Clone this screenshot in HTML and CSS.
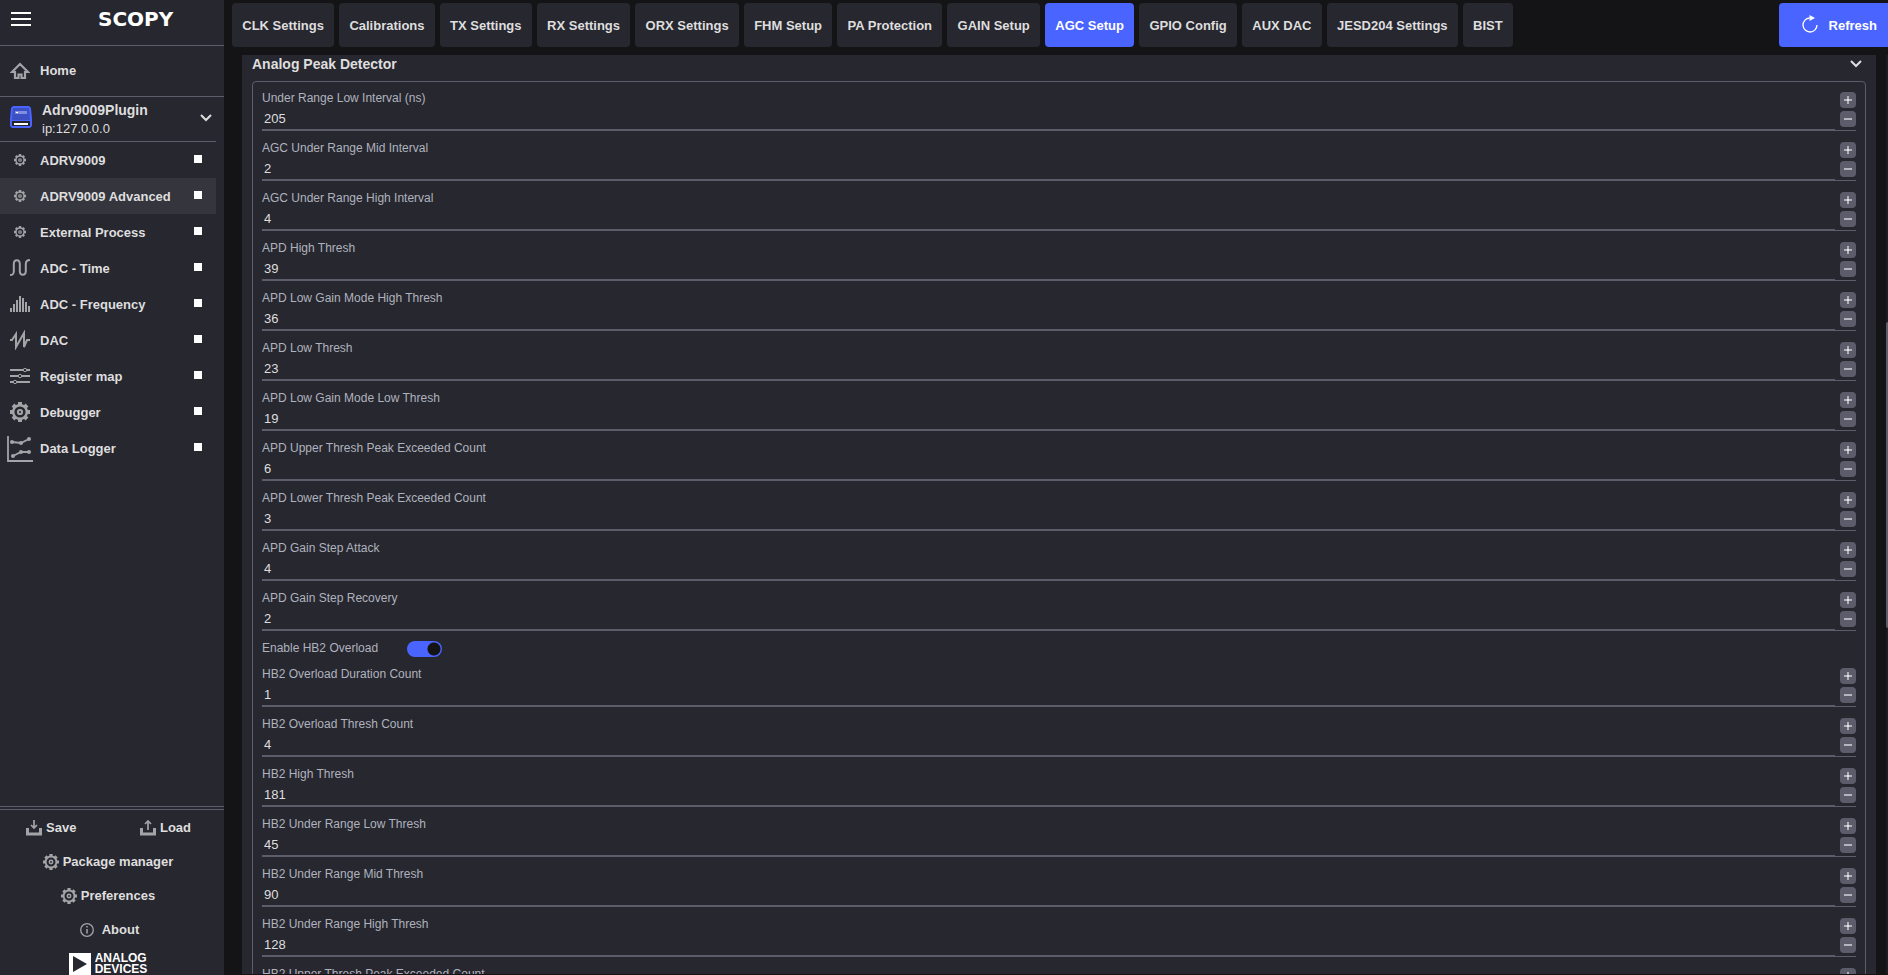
FILE: index.html
```html
<!DOCTYPE html>
<html lang="en">
<head>
<meta charset="utf-8">
<title>Scopy - AGC Setup</title>
<link rel="stylesheet" href="styles.css">
</head>
<body>
<svg class="defs" aria-hidden="true">
  <symbol id="gear" viewBox="0 0 20 20">
    <circle cx="10" cy="10" r="6.8" fill="none" stroke="currentColor" stroke-width="2.4"/>
    <circle cx="10" cy="10" r="2.1" fill="none" stroke="currentColor" stroke-width="2"/>
    <path d="M10 0v3.5M10 16.500v3.500M0 10h3.500M16.500 10h3.500M3 3l2.400 2.400M14.600 14.600l2.400 2.400M3 17l2.400-2.400M14.600 5.400l2.400-2.400" stroke="currentColor" stroke-width="4"/>
  </symbol>
  <symbol id="chevron" viewBox="0 0 12 8">
    <path d="M1 1l5 5 5-5" fill="none" stroke="currentColor" stroke-width="2"/>
  </symbol>
</svg>

<aside class="sidebar">
  <header class="brand">
    <button class="menu" aria-label="Menu"><span></span><span></span><span></span></button>
    <span class="wordmark">SCOPY</span>
  </header>
  <a class="home" href="#">
    <svg class="icon" viewBox="0 0 20 20"><path d="M10 3L2 11h3v6h3.500v-3.500h3V17H15v-6h3z" fill="none" stroke="currentColor" stroke-width="2.200"/></svg>
    Home
  </a>
  <button class="device">
    <svg class="device-icon" viewBox="0 0 22 22"><path d="M3 0h16l2 2 1 11v7l-2 2H2l-2-2v-7L1 2z" fill="#4a64ff"/><path d="M3 2h16l1 12H2z" fill="#3c50c4"/><path d="M5 5h12v3H5z" fill="#7f8fe0"/><path d="M6 6h2v1H6z" fill="#fff"/><path d="M2 15h18v5H2z" fill="#25252e"/><path d="M4 17h14v2H4z" fill="#fff"/></svg>
    <span class="device-text"><strong>Adrv9009Plugin</strong><span>ip:127.0.0.0</span></span>
    <svg class="chevron"><use href="#chevron"/></svg>
  </button>
  <nav class="tools">
    <a href="#"><svg class="icon small"><use href="#gear"/></svg>ADRV9009<i></i></a>
    <a href="#" class="current"><svg class="icon small"><use href="#gear"/></svg>ADRV9009 Advanced<i></i></a>
    <a href="#"><svg class="icon small"><use href="#gear"/></svg>External Process<i></i></a>
    <a href="#"><svg class="icon" viewBox="0 0 20 20"><path d="M0 17c3 0 3.800-1 3.800-4V6c0-5 6-5 6 0v7c0 5 6 5 6 0V6c0-3 1.500-4 4.200-4" fill="none" stroke="currentColor" stroke-width="2"/></svg>ADC - Time<i></i></a>
    <a href="#"><svg class="icon" viewBox="0 0 20 20"><path d="M1 18v-4M4 18v-8M7 18V6M10 18V2M13 18V4M16 18V8M19 18v-6" stroke="currentColor" stroke-width="2"/></svg>ADC - Frequency<i></i></a>
    <a href="#"><svg class="icon" viewBox="0 0 20 20"><path d="M0 10h2l4-6v13L14 3v14l3-7h3" fill="none" stroke="currentColor" stroke-width="2"/></svg>DAC<i></i></a>
    <a href="#"><svg class="icon" viewBox="0 0 20 20"><path d="M0 4h14M17 4h3M0 10h9M12 10h8M0 16h4M7 16h13" stroke="currentColor" stroke-width="2"/><g fill="none" stroke="currentColor"><circle cx="15" cy="4" r="1.700"/><circle cx="10" cy="10" r="1.700"/><circle cx="5" cy="16" r="1.700"/></g></svg>Register map<i></i></a>
    <a href="#"><svg class="icon"><use href="#gear"/></svg>Debugger<i></i></a>
    <a href="#"><svg class="icon large" viewBox="0 0 26 26"><g fill="none" stroke="currentColor" stroke-width="1.800"><path d="M1 0v25h25"/><path d="M5 6l9 1 8-4M6 20l8-4h8"/></g><g fill="currentColor"><circle cx="5" cy="6" r="2"/><circle cx="14" cy="7" r="2"/><circle cx="22" cy="3" r="2"/><circle cx="6" cy="20" r="2"/><circle cx="14" cy="16" r="2"/><circle cx="22" cy="16" r="2"/></g></svg>Data Logger<i></i></a>
  </nav>
  <footer class="side-footer">
    <div class="side-actions">
      <div class="save-load">
        <button><svg class="icon" viewBox="0 0 16 16"><path d="M1.500 8v6h13V8" fill="none" stroke="currentColor" stroke-width="3"/><path d="M8 0v8M5 5l3 3 3-3" fill="none" stroke="currentColor" stroke-width="1.700"/></svg>Save</button>
        <button><svg class="icon" viewBox="0 0 16 16"><path d="M1.500 8v6h13V8" fill="none" stroke="currentColor" stroke-width="3"/><path d="M8 10V1M5 4l3-3 3 3" fill="none" stroke="currentColor" stroke-width="1.700"/></svg>Load</button>
      </div>
      <button><svg class="icon"><use href="#gear"/></svg>Package manager</button>
      <button><svg class="icon"><use href="#gear"/></svg>Preferences</button>
      <button><svg class="icon about" viewBox="0 0 20 16"><circle cx="9" cy="8" r="6.300" fill="none" stroke="currentColor" stroke-width="1.300"/><path d="M9 7v4.500M9 4v1.500" stroke="currentColor" stroke-width="1.500"/></svg>About</button>
      <div class="maker">
        <svg viewBox="0 0 22 22"><path d="M0 0h22v22H0z" fill="#fff"/><path d="M4 3v16l14-8z" fill="#272730"/></svg>
        <span>ANALOG<br>DEVICES</span>
      </div>
    </div>
  </footer>
</aside>

<main class="main">
  <div class="topbar">
    <nav class="tabs">
      <button>CLK Settings</button>
      <button>Calibrations</button>
      <button>TX Settings</button>
      <button>RX Settings</button>
      <button>ORX Settings</button>
      <button>FHM Setup</button>
      <button>PA Protection</button>
      <button>GAIN Setup</button>
      <button class="active">AGC Setup</button>
      <button>GPIO Config</button>
      <button>AUX DAC</button>
      <button>JESD204 Settings</button>
      <button>BIST</button>
    </nav>
    <button class="refresh"><svg viewBox="0 0 18 18"><path d="M8.500 3A7 7 0 1 0 16 10" fill="none" stroke="currentColor" stroke-width="1.300"/><path d="M8.500 0v6l5.500-3z" fill="currentColor"/></svg>Refresh</button>
  </div>
  <div class="scroller">
    <section class="panel">
      <button class="panel-head">Analog Peak Detector<svg class="chevron"><use href="#chevron"/></svg></button>
      <div class="group">
        <div class="field"><div class="entry"><label for="f1">Under Range Low Interval (ns)</label><input id="f1" value="205"></div><div class="steps"><button class="plus" aria-label="Increase"></button><button aria-label="Decrease"></button></div></div>
        <div class="field"><div class="entry"><label for="f2">AGC Under Range Mid Interval</label><input id="f2" value="2"></div><div class="steps"><button class="plus" aria-label="Increase"></button><button aria-label="Decrease"></button></div></div>
        <div class="field"><div class="entry"><label for="f3">AGC Under Range High Interval</label><input id="f3" value="4"></div><div class="steps"><button class="plus" aria-label="Increase"></button><button aria-label="Decrease"></button></div></div>
        <div class="field"><div class="entry"><label for="f4">APD High Thresh</label><input id="f4" value="39"></div><div class="steps"><button class="plus" aria-label="Increase"></button><button aria-label="Decrease"></button></div></div>
        <div class="field"><div class="entry"><label for="f5">APD Low Gain Mode High Thresh</label><input id="f5" value="36"></div><div class="steps"><button class="plus" aria-label="Increase"></button><button aria-label="Decrease"></button></div></div>
        <div class="field"><div class="entry"><label for="f6">APD Low Thresh</label><input id="f6" value="23"></div><div class="steps"><button class="plus" aria-label="Increase"></button><button aria-label="Decrease"></button></div></div>
        <div class="field"><div class="entry"><label for="f7">APD Low Gain Mode Low Thresh</label><input id="f7" value="19"></div><div class="steps"><button class="plus" aria-label="Increase"></button><button aria-label="Decrease"></button></div></div>
        <div class="field"><div class="entry"><label for="f8">APD Upper Thresh Peak Exceeded Count</label><input id="f8" value="6"></div><div class="steps"><button class="plus" aria-label="Increase"></button><button aria-label="Decrease"></button></div></div>
        <div class="field"><div class="entry"><label for="f9">APD Lower Thresh Peak Exceeded Count</label><input id="f9" value="3"></div><div class="steps"><button class="plus" aria-label="Increase"></button><button aria-label="Decrease"></button></div></div>
        <div class="field"><div class="entry"><label for="f10">APD Gain Step Attack</label><input id="f10" value="4"></div><div class="steps"><button class="plus" aria-label="Increase"></button><button aria-label="Decrease"></button></div></div>
        <div class="field"><div class="entry"><label for="f11">APD Gain Step Recovery</label><input id="f11" value="2"></div><div class="steps"><button class="plus" aria-label="Increase"></button><button aria-label="Decrease"></button></div></div>
        <div class="switch-row"><label for="hb2">Enable HB2 Overload</label><input id="hb2" class="switch" type="checkbox" role="switch" checked></div>
        <div class="field"><div class="entry"><label for="f12">HB2 Overload Duration Count</label><input id="f12" value="1"></div><div class="steps"><button class="plus" aria-label="Increase"></button><button aria-label="Decrease"></button></div></div>
        <div class="field"><div class="entry"><label for="f13">HB2 Overload Thresh Count</label><input id="f13" value="4"></div><div class="steps"><button class="plus" aria-label="Increase"></button><button aria-label="Decrease"></button></div></div>
        <div class="field"><div class="entry"><label for="f14">HB2 High Thresh</label><input id="f14" value="181"></div><div class="steps"><button class="plus" aria-label="Increase"></button><button aria-label="Decrease"></button></div></div>
        <div class="field"><div class="entry"><label for="f15">HB2 Under Range Low Thresh</label><input id="f15" value="45"></div><div class="steps"><button class="plus" aria-label="Increase"></button><button aria-label="Decrease"></button></div></div>
        <div class="field"><div class="entry"><label for="f16">HB2 Under Range Mid Thresh</label><input id="f16" value="90"></div><div class="steps"><button class="plus" aria-label="Increase"></button><button aria-label="Decrease"></button></div></div>
        <div class="field"><div class="entry"><label for="f17">HB2 Under Range High Thresh</label><input id="f17" value="128"></div><div class="steps"><button class="plus" aria-label="Increase"></button><button aria-label="Decrease"></button></div></div>
        <div class="field"><div class="entry"><label for="f18">HB2 Upper Thresh Peak Exceeded Count</label><input id="f18"></div><div class="steps"><button class="plus" aria-label="Increase"></button><button aria-label="Decrease"></button></div></div>
      </div>
    </section>
    <div class="scrollbar"><div class="thumb"></div></div>
  </div>
</main>
</body>
</html>
```
FILE: styles.css
```css
:root {
  --bg: #141416;
  --surface: #272730;
  --line: #5c5c6b;
  --accent: #4a64ff;
  --text: #dedede;
  --muted: #afb3bd;
  --icon: #a4a4a8;
}

* { box-sizing: border-box; }

body {
  margin: 0;
  height: 100vh;
  display: flex;
  overflow: hidden;
  background: var(--bg);
  color: var(--text);
  font: 13px/16px "Liberation Sans", Arial, sans-serif;
}

button {
  margin: 0;
  padding: 0;
  border: 0;
  background: none;
  color: inherit;
  font: inherit;
  font-weight: bold;
}

a { color: inherit; text-decoration: none; }

.defs { display: none; }

.icon {
  flex: none;
  width: 20px;
  height: 20px;
  color: var(--icon);
}

.chevron { flex: none; width: 12px; height: 8px; }

/* Sidebar */
.sidebar {
  flex: none;
  width: 224px;
  display: flex;
  flex-direction: column;
  background: var(--surface);
}

.brand {
  height: 46px;
  display: flex;
  align-items: center;
  padding: 0 11px 7px;
  border-bottom: 1px solid var(--line);
}

.menu { width: 20px; display: grid; gap: 4px; }
.menu span { height: 2px; background: #fff; }

.wordmark {
  margin-left: 67px;
  color: #fff;
  font: bold 20px/24px "DejaVu Sans", sans-serif;
}

.home {
  height: 51px;
  display: flex;
  align-items: center;
  gap: 10px;
  padding: 0 10px;
  border-bottom: 1px solid var(--line);
  font-weight: bold;
}

.device {
  width: 216px;
  height: 45px;
  display: flex;
  align-items: center;
  padding: 0 4px 0 10px;
  border-bottom: 1px solid var(--line);
  text-align: left;
}

.device-icon { width: 22px; height: 22px; margin-bottom: 4px; }
.device .chevron { margin: 0 0 3px auto; }

.device-text {
  display: grid;
  gap: 1px;
  margin-left: 10px;
  font-weight: normal;
  line-height: 18px;
}

.device-text strong { font-size: 14px; }

.tools {
  flex: 1;
  min-height: 0;
  width: 216px;
  overflow: hidden;
}

.tools a {
  height: 36px;
  display: flex;
  align-items: center;
  gap: 10px;
  padding: 2px 14px 0 10px;
  font-weight: bold;
}

.tools .current { background: #35353d; }
.tools i { width: 8px; height: 8px; margin: 0 0 4px auto; background: #fff; }
.tools .icon { margin-bottom: 2px; }
.tools .small { width: 12px; height: 12px; margin: 0 4px 2px; }
.tools .large { width: 26px; height: 26px; margin: 0 -3px; }

.side-footer { border-top: 1px solid var(--line); padding-top: 2px; }

.side-actions {
  display: flex;
  flex-direction: column;
  padding: 1px 8px 0 0;
  border-top: 1px solid var(--line);
}

.side-actions button {
  height: 34px;
  display: flex;
  align-items: center;
  justify-content: center;
  gap: 4px;
}

.side-actions .icon { width: 16px; height: 16px; }
.side-actions .about { width: 20px; margin-left: 1px; }
.save-load { display: flex; justify-content: space-between; padding: 0 25px 0 26px; }

.maker {
  height: 22px;
  display: flex;
  justify-content: center;
  gap: 4px;
  margin-top: 6px;
  color: #fff;
  font-size: 12px;
  font-weight: bold;
  line-height: 11px;
}

.maker svg { width: 22px; height: 22px; }

/* Main area */
.main {
  flex: 1;
  min-width: 0;
  display: flex;
  flex-direction: column;
}

.topbar {
  display: flex;
  justify-content: space-between;
  padding: 3px 0 8px 8px;
}

.tabs { flex: 0 1 1281px; display: flex; gap: 5px; }

.tabs button {
  flex: 1 0 auto;
  height: 44px;
  padding: 2px 10px 0;
  border-radius: 4px;
  background: var(--surface);
  white-space: nowrap;
}

.tabs .active { background: var(--accent); color: #fff; }

.refresh {
  height: 44px;
  display: flex;
  align-items: center;
  gap: 10px;
  padding: 2px 11px 0 22px;
  border-radius: 4px 0 0 4px;
  background: var(--accent);
  color: #fff;
}

.refresh svg { width: 18px; height: 18px; margin-bottom: 4px; }

.scroller {
  flex: 1;
  min-height: 0;
  display: flex;
  justify-content: space-between;
  gap: 10px;
  margin-bottom: 1px;
  padding-left: 18px;
  overflow: hidden;
}

.panel { flex: 1; padding: 0 10px; background: var(--surface); }

.panel-head {
  width: 100%;
  height: 26px;
  display: flex;
  align-items: center;
  justify-content: space-between;
  padding: 0 4px 8px 0;
  font-size: 14px;
}

.group {
  display: grid;
  gap: 9px;
  padding: 8px 9px;
  border: 1px solid var(--line);
  border-radius: 4px;
}

.field { display: flex; border-bottom: 1px solid var(--line); }
.entry { flex: 1; display: grid; }

label { color: var(--muted); font-size: 12px; line-height: 17px; }

.entry input {
  width: 100%;
  height: 23px;
  padding: 0 2px;
  border: 0;
  border-bottom: 1px solid var(--line);
  background: none;
  color: var(--text);
  font: inherit;
}

.steps {
  width: 21px;
  display: grid;
  align-content: start;
  justify-content: end;
  gap: 3px;
  padding-top: 2px;
}

.steps button {
  width: 16px;
  height: 16px;
  border-radius: 4px;
  background: linear-gradient(#b4b4bc, #b4b4bc) center / 8px 2px no-repeat, var(--line);
}

.steps .plus {
  background: linear-gradient(#e4e4e8, #e4e4e8) center / 2px 2px no-repeat, linear-gradient(#b0b0b8, #b0b0b8) center / 8px 2px no-repeat, linear-gradient(#b0b0b8, #b0b0b8) center / 2px 8px no-repeat, var(--line);
}

.switch-row { height: 17px; display: flex; align-items: end; gap: 29px; }

.switch {
  appearance: none;
  width: 35px;
  height: 16px;
  margin: 0;
  border-radius: 8px;
  background: radial-gradient(circle at 27px 8px, var(--bg) 6px, var(--accent) 7px);
}

.scrollbar { width: 2px; padding-top: 267px; background: #1e1e22; }
.thumb { height: 306px; border-radius: 2px 0 0 2px; background: var(--line); }
```
